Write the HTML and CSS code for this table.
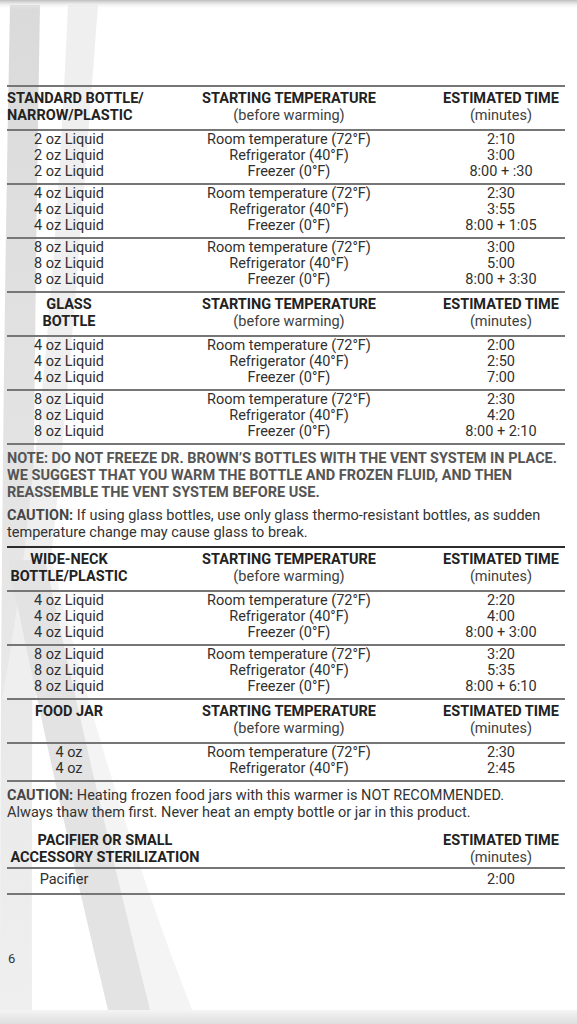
FILE: index.html
```html
<!DOCTYPE html>
<html lang="en">
<head>
<meta charset="utf-8">
<title>Warming times</title>
<link rel="stylesheet" href="styles.css">
</head>
<body>
<svg class="bg" width="577" height="1024" viewBox="0 0 577 1024" aria-hidden="true">
  <defs>
    <linearGradient id="topsh" x1="0" y1="0" x2="0" y2="1">
      <stop offset="0" stop-color="#bdbdbd"/>
      <stop offset="1" stop-color="#ffffff" stop-opacity="0"/>
    </linearGradient>
    <linearGradient id="botsh" x1="0" y1="0" x2="0" y2="1">
      <stop offset="0" stop-color="#f4f4f4"/>
      <stop offset="1" stop-color="#dedede"/>
    </linearGradient>
    <linearGradient id="bandA" x1="0" y1="0" x2="0" y2="1">
      <stop offset="0" stop-color="#dadada"/>
      <stop offset="1" stop-color="#efefef"/>
    </linearGradient>
  </defs>
  <path d="M10,5 L40,5 Q31,500 32,1010 L0,1010 Q0,500 10,5 Z" fill="url(#bandA)"/>
  <path d="M68,5 L98,5 Q70,380 55,520 Q45,620 35,700 L2,700 Q20,600 30,500 Q55,300 68,5 Z" fill="#efefef"/>
  <path d="M8,560 L52,560 Q110,800 192,1010 L118,1010 Q60,790 8,560 Z" fill="#f4f4f4"/>
  <path d="M8,560 L45,560 Q95,790 150,1010 L108,1010 Q55,790 8,560 Z" fill="#e3e3e3"/>
  <rect x="0" y="0" width="577" height="9" fill="url(#topsh)"/>
  <rect x="0" y="1010" width="577" height="14" fill="url(#botsh)"/>
</svg>

<main class="page">
  <section class="tbl">
    <div class="hdr">
      <div class="c1 left b">STANDARD BOTTLE/<br>NARROW/PLASTIC</div>
      <div class="c2"><span class="b">STARTING TEMPERATURE</span><br>(before warming)</div>
      <div class="c3"><span class="b">ESTIMATED TIME</span><br>(minutes)</div>
    </div>
    <div class="grp">
      <div class="r"><span class="c1">2 oz Liquid</span><span class="c2">Room temperature (72°F)</span><span class="c3">2:10</span></div>
      <div class="r"><span class="c1">2 oz Liquid</span><span class="c2">Refrigerator (40°F)</span><span class="c3">3:00</span></div>
      <div class="r"><span class="c1">2 oz Liquid</span><span class="c2">Freezer (0°F)</span><span class="c3">8:00 + :30</span></div>
    </div>
    <div class="grp">
      <div class="r"><span class="c1">4 oz Liquid</span><span class="c2">Room temperature (72°F)</span><span class="c3">2:30</span></div>
      <div class="r"><span class="c1">4 oz Liquid</span><span class="c2">Refrigerator (40°F)</span><span class="c3">3:55</span></div>
      <div class="r"><span class="c1">4 oz Liquid</span><span class="c2">Freezer (0°F)</span><span class="c3">8:00 + 1:05</span></div>
    </div>
    <div class="grp">
      <div class="r"><span class="c1">8 oz Liquid</span><span class="c2">Room temperature (72°F)</span><span class="c3">3:00</span></div>
      <div class="r"><span class="c1">8 oz Liquid</span><span class="c2">Refrigerator (40°F)</span><span class="c3">5:00</span></div>
      <div class="r"><span class="c1">8 oz Liquid</span><span class="c2">Freezer (0°F)</span><span class="c3">8:00 + 3:30</span></div>
    </div>

    <div class="hdr">
      <div class="c1 b">GLASS<br>BOTTLE</div>
      <div class="c2"><span class="b">STARTING TEMPERATURE</span><br>(before warming)</div>
      <div class="c3"><span class="b">ESTIMATED TIME</span><br>(minutes)</div>
    </div>
    <div class="grp">
      <div class="r"><span class="c1">4 oz Liquid</span><span class="c2">Room temperature (72°F)</span><span class="c3">2:00</span></div>
      <div class="r"><span class="c1">4 oz Liquid</span><span class="c2">Refrigerator (40°F)</span><span class="c3">2:50</span></div>
      <div class="r"><span class="c1">4 oz Liquid</span><span class="c2">Freezer (0°F)</span><span class="c3">7:00</span></div>
    </div>
    <div class="grp">
      <div class="r"><span class="c1">8 oz Liquid</span><span class="c2">Room temperature (72°F)</span><span class="c3">2:30</span></div>
      <div class="r"><span class="c1">8 oz Liquid</span><span class="c2">Refrigerator (40°F)</span><span class="c3">4:20</span></div>
      <div class="r"><span class="c1">8 oz Liquid</span><span class="c2">Freezer (0°F)</span><span class="c3">8:00 + 2:10</span></div>
    </div>
  </section>

  <section class="notes">
    <p class="note">NOTE: DO NOT FREEZE DR. BROWN’S BOTTLES WITH THE VENT SYSTEM IN PLACE.<br>WE SUGGEST THAT YOU WARM THE BOTTLE AND FROZEN FLUID, AND THEN<br>REASSEMBLE THE VENT SYSTEM BEFORE USE.</p>
    <p class="caution"><span class="lbl">CAUTION:</span> If using glass bottles, use only glass thermo-resistant bottles, as sudden<br>temperature change may cause glass to break.</p>
  </section>

  <section class="tbl dark">
    <div class="hdr">
      <div class="c1 b">WIDE-NECK<br>BOTTLE/PLASTIC</div>
      <div class="c2"><span class="b">STARTING TEMPERATURE</span><br>(before warming)</div>
      <div class="c3"><span class="b">ESTIMATED TIME</span><br>(minutes)</div>
    </div>
    <div class="grp">
      <div class="r"><span class="c1">4 oz Liquid</span><span class="c2">Room temperature (72°F)</span><span class="c3">2:20</span></div>
      <div class="r"><span class="c1">4 oz Liquid</span><span class="c2">Refrigerator (40°F)</span><span class="c3">4:00</span></div>
      <div class="r"><span class="c1">4 oz Liquid</span><span class="c2">Freezer (0°F)</span><span class="c3">8:00 + 3:00</span></div>
    </div>
    <div class="grp">
      <div class="r"><span class="c1">8 oz Liquid</span><span class="c2">Room temperature (72°F)</span><span class="c3">3:20</span></div>
      <div class="r"><span class="c1">8 oz Liquid</span><span class="c2">Refrigerator (40°F)</span><span class="c3">5:35</span></div>
      <div class="r"><span class="c1">8 oz Liquid</span><span class="c2">Freezer (0°F)</span><span class="c3">8:00 + 6:10</span></div>
    </div>

    <div class="hdr">
      <div class="c1 b">FOOD JAR</div>
      <div class="c2"><span class="b">STARTING TEMPERATURE</span><br>(before warming)</div>
      <div class="c3"><span class="b">ESTIMATED TIME</span><br>(minutes)</div>
    </div>
    <div class="grp">
      <div class="r"><span class="c1">4 oz</span><span class="c2">Room temperature (72°F)</span><span class="c3">2:30</span></div>
      <div class="r"><span class="c1">4 oz</span><span class="c2">Refrigerator (40°F)</span><span class="c3">2:45</span></div>
    </div>
  </section>

  <section class="notes notes2">
    <p class="caution"><span class="lbl">CAUTION:</span> Heating frozen food jars with this warmer is NOT RECOMMENDED.<br>Always thaw them first. Never heat an empty bottle or jar in this product.</p>
  </section>

  <section class="tbl pac">
    <div class="hdr hdr-pac">
      <div class="pac-title b">PACIFIER OR SMALL<br>ACCESSORY STERILIZATION</div>
      <div class="c3"><span class="b">ESTIMATED TIME</span><br>(minutes)</div>
    </div>
    <div class="grp grp-last">
      <div class="r"><span class="c1 pac-item">Pacifier</span><span class="c2"></span><span class="c3">2:00</span></div>
    </div>
  </section>

  <footer class="pnum">6</footer>
</main>
</body>
</html>
```

FILE: styles.css
```css
* { box-sizing: border-box; }

html, body {
  margin: 0;
  padding: 0;
}

body {
  width: 577px;
  height: 1024px;
  position: relative;
  overflow: hidden;
  background: #ffffff;
  font-family: Roboto, "Liberation Sans", sans-serif;
  font-size: 14.5px;
  color: #303030;
}

.bg {
  position: absolute;
  left: 0;
  top: 0;
  z-index: 0;
}

.page {
  position: relative;
  z-index: 1;
  padding: 85px 12px 0 7px;
}

.hdr,
.r {
  display: grid;
  grid-template-columns: 124px 306px 1fr;
  white-space: nowrap;
}

.hdr {
  border-top: 2px solid #767676;
  padding: 3px 0 5px;
  line-height: 17px;
  color: #404040;
}

.grp {
  border-top: 2px solid #767676;
  padding: 1px 0 3px;
  line-height: 16px;
}

.c1, .c2, .c3 { text-align: center; }
.c2 { padding-left: 10px; }
.left { text-align: left; }

.b {
  font-weight: 700;
  color: #222222;
}

.notes {
  border-top: 2px solid #767676;
  padding: 4.5px 0 5.5px;
  line-height: 17px;
}

.notes p { margin: 0; white-space: nowrap; }

.note {
  font-weight: 700;
  color: #555555;
  margin-bottom: 6px !important;
}

.caution { color: #333333; }

.lbl {
  font-weight: 700;
  color: #474747;
}

.tbl.dark > .hdr:first-child { border-top-color: #2c2c2c; }

.notes2 { padding-bottom: 0; }

.hdr-pac {
  border-top: 0;
  padding: 11px 0 1.5px;
  grid-template-columns: 430px 1fr;
}

.pac-title {
  width: 196px;
  text-align: center;
}

.grp-last {
  padding: 3px 0 5px;
  border-bottom: 2px solid #767676;
}

.pac-item { padding-right: 10px; }

.pnum {
  margin-top: 56px;
  padding-left: 1px;
  font-size: 13px;
  color: #333333;
}
```
